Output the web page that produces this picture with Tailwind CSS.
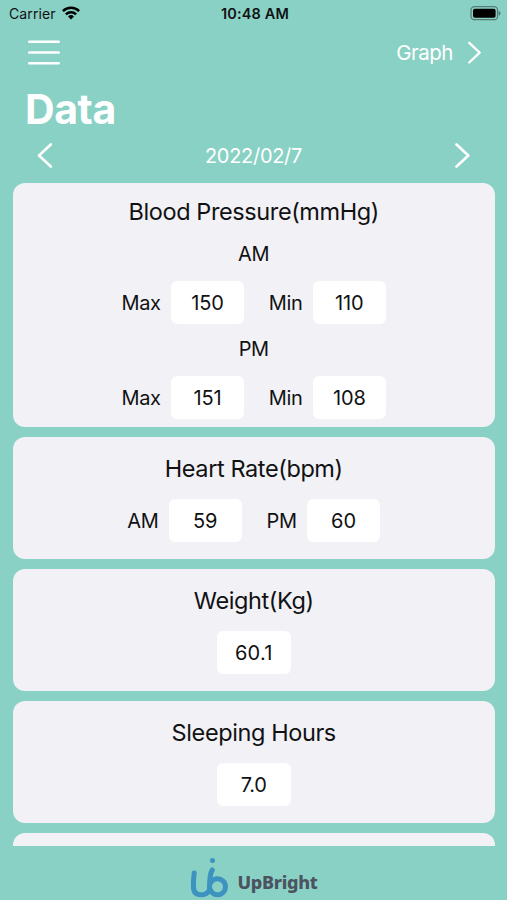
<!DOCTYPE html>
<html lang="en">
<head>
    <meta charset="UTF-8">
    <meta name="viewport" content="width=device-width, initial-scale=1.0">
    <title>Data - UpBright</title>
    <script src="https://cdn.jsdelivr.net/npm/@tailwindcss/browser@4"></script>
</head>
<body class="h-[900px] flex flex-col overflow-hidden bg-[#8ad1c5] text-[#111113] font-['Inter',sans-serif]">
    <!-- Status bar -->
    <div class="h-7 shrink-0 grid grid-cols-3 items-center pl-[9px] pr-[6px] text-[14px] leading-7">
        <div class="flex items-center gap-1.5">
            <span class="tracking-[0.1px]">Carrier</span>
            <svg class="w-[18px] h-[14px] -mt-0.5" viewBox="0 0 18 14" fill="none" stroke="#000" stroke-width="2.5">
                <path d="M.9 5.2a11.5 11.5 0 0 1 16.2 0M3.9 8.3a7.2 7.2 0 0 1 10.2 0" />
                <path d="M9 13.6l-3-3.1a4.3 4.3 0 0 1 6 0z" fill="#000" stroke="none" />
            </svg>
        </div>
        <span class="text-center font-semibold whitespace-nowrap text-[14.5px] tracking-[0.15px]">10:48 AM</span>
        <svg class="justify-self-end w-[31px] h-[15px] -mt-0.5" viewBox="0 0 31 15">
            <rect x="1" y=".7" width="26.6" height="13" rx="3.5" fill="none" stroke="#000" stroke-opacity=".4" stroke-width="1.3" />
            <rect x="3" y="2.7" width="22.6" height="9" rx="1.8" />
            <path d="M28.8 5v4.6c2.2-.8 2.2-3.8 0-4.6z" fill-opacity=".45" />
        </svg>
    </div>

    <!-- Navigation -->
    <div class="h-[50px] shrink-0 flex items-center justify-between pl-7 pr-[25px] text-white">
        <svg class="w-8 h-[25px] -mt-0.5" viewBox="0 0 32 25" stroke="#fff" stroke-width="2.6" stroke-linecap="round">
            <path d="M1.3 1.7h29.4M1.3 12.5h29.4M1.3 23.3h29.4" />
        </svg>
        <div class="flex items-center gap-[14px]">
            <span class="text-[20.5px] tracking-[-0.5px]">Graph</span>
            <svg class="w-[15px] h-6" viewBox="0 0 15 24" fill="none" stroke="#fff" stroke-width="2.3" stroke-linecap="round" stroke-linejoin="round">
                <path d="M2.2 1.8l10.5 9.9L2.2 21.5" />
            </svg>
        </div>
    </div>
    <h1 class="h-[60px] shrink-0 pl-[25px] text-[41px] leading-[62px] tracking-[-0.4px] font-bold text-white">Data</h1>
    <div class="h-[35px] shrink-0 flex items-center justify-between px-9 text-white">
        <svg class="w-[17px] h-[26px]" viewBox="0 0 17 26" fill="none" stroke="#fff" stroke-width="2.6" stroke-linecap="round" stroke-linejoin="round">
            <path d="M14.8 1.5L3 12.5l11.8 11" />
        </svg>
        <span class="text-[20px] tracking-[-0.3px]">2022/02/7</span>
        <svg class="w-[17px] h-[26px]" viewBox="0 0 17 26" fill="none" stroke="#fff" stroke-width="2.6" stroke-linecap="round" stroke-linejoin="round">
            <path d="M2.5 1.5l11.8 11-11.8 11" />
        </svg>
    </div>

    <!-- Records -->
    <main class="h-[673px] shrink-0 overflow-hidden pt-[9.5px] pl-[13px] pr-[12.5px] flex flex-col gap-[9.5px] text-[20px] tracking-[-0.3px]">
        <section class="h-[244.5px] shrink-0 rounded-[12px] bg-[#f1f1f6] flex flex-col items-center">
            <h2 class="mt-[9px] h-10 text-[23.5px] leading-10 tracking-[-0.4px]">Blood Pressure(mmHg)</h2>
            <p class="h-[49px] leading-[45px]">AM</p>
            <div class="flex items-start h-[43px] leading-[45px]">
                <span>Max</span>
                <span class="ml-[10px] w-[73.5px] h-[43px] rounded-md bg-white text-center tracking-[-0.1px]">150</span>
                <span class="ml-[24.5px]">Min</span>
                <span class="ml-[10px] w-[73.5px] h-[43px] rounded-md bg-white text-center tracking-[-0.1px]">110</span>
            </div>
            <p class="h-[52px] leading-[51px]">PM</p>
            <div class="flex items-start h-[43px] leading-[45px]">
                <span>Max</span>
                <span class="ml-[10px] w-[73.5px] h-[43px] rounded-md bg-white text-center tracking-[-0.1px]">151</span>
                <span class="ml-[24.5px]">Min</span>
                <span class="ml-[10px] w-[73.5px] h-[43px] rounded-md bg-white text-center tracking-[-0.1px]">108</span>
            </div>
        </section>

        <section class="h-[122.5px] shrink-0 rounded-[12px] bg-[#f1f1f6] flex flex-col items-center">
            <h2 class="mt-3 mb-[10.5px] h-10 text-[23.5px] leading-10 tracking-[-0.4px]">Heart Rate(bpm)</h2>
            <div class="flex items-start h-[43px] leading-[45px]">
                <span>AM</span>
                <span class="ml-[10px] w-[73.5px] h-[43px] rounded-md bg-white text-center tracking-[-0.1px]">59</span>
                <span class="ml-[24.5px]">PM</span>
                <span class="ml-[10px] w-[73.5px] h-[43px] rounded-md bg-white text-center tracking-[-0.1px]">60</span>
            </div>
        </section>

        <section class="h-[122.5px] shrink-0 rounded-[12px] bg-[#f1f1f6] flex flex-col items-center">
            <h2 class="mt-3 mb-[10.5px] h-10 text-[23.5px] leading-10 tracking-[-0.4px]">Weight(Kg)</h2>
            <span class="w-[74px] h-[43px] leading-[45px] rounded-md bg-white text-center tracking-[0.2px]">60.1</span>
        </section>

        <section class="h-[122.5px] shrink-0 rounded-[12px] bg-[#f1f1f6] flex flex-col items-center">
            <h2 class="mt-3 mb-[10.5px] h-10 text-[23.5px] leading-10 tracking-[-0.4px]">Sleeping Hours</h2>
            <span class="w-[74px] h-[43px] leading-[45px] rounded-md bg-white text-center">7.0</span>
        </section>

        <section class="h-[122.5px] shrink-0 rounded-[12px] bg-[#f1f1f6]"></section>
    </main>

    <!-- Brand -->
    <footer class="flex-1 flex justify-center pt-[11px] gap-[9px]">
        <svg class="w-[39px] h-[42px]" viewBox="0 0 39 42" fill="none" stroke="#3d93c0" stroke-width="5" stroke-linecap="round" stroke-linejoin="round">
            <path d="M4.200 16C3.600 20 3.400 24 3.400 29c0 6 3 8.800 7.600 8.800 4 0 7-2 8.500-5" />
            <path d="M22.300 13c-2 3-2.800 8-2.800 18 1.500 4.500 4 6.800 8 6.800a8 8 0 1 0-8-7.800" />
            <circle cx="22.500" cy="3.400" r="2.500" fill="#3d93c0" stroke="none" />
        </svg>
        <span class="text-[18px] leading-[50px] font-extrabold tracking-[-0.3px] font-['Noto_Sans',sans-serif] text-[#4b5360]">UpBright</span>
    </footer>
</body>
</html>
